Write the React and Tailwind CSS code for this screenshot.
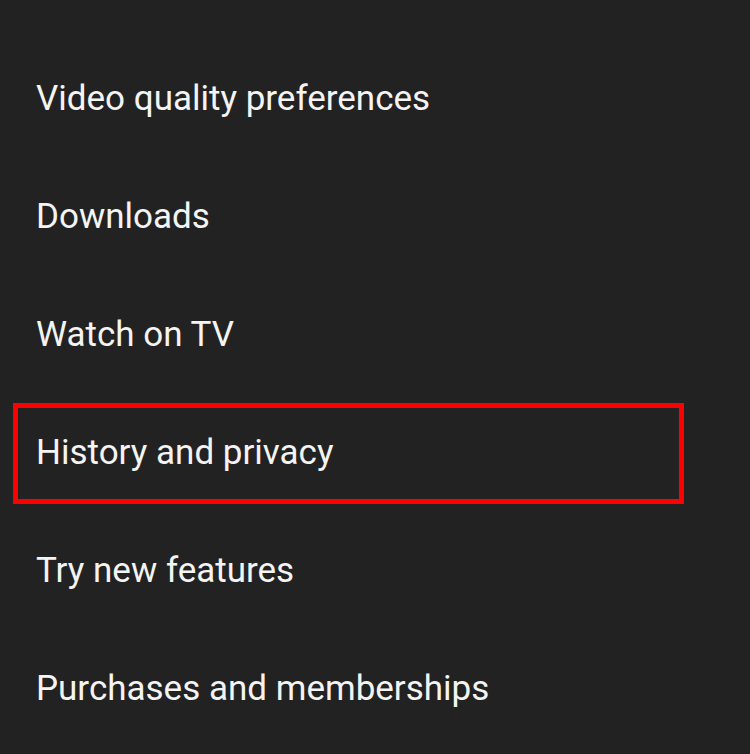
import React from "react";

const items = [
  "Autoplay",
  "Video quality preferences",
  "Downloads",
  "Watch on TV",
  "History and privacy",
  "Try new features",
  "Purchases and memberships",
];

const App = () => {
  return (
    <div className="h-[754px] w-[750px] overflow-hidden bg-[#222222] font-['Roboto',sans-serif] text-[#f4f4f4]">
      <div className="-mt-[79px] flex flex-col">
        {items.map((label) => (
          <div key={label} className="relative flex h-[118px] items-center pl-[36px]">
            <span className="text-[35px] leading-none">{label}</span>
            {label === "History and privacy" && (
              <div className="absolute left-[13px] top-[10px] h-[101px] w-[671px] border-[5px] border-[#ff0000]" />
            )}
          </div>
        ))}
      </div>
    </div>
  );
};

export default App;
